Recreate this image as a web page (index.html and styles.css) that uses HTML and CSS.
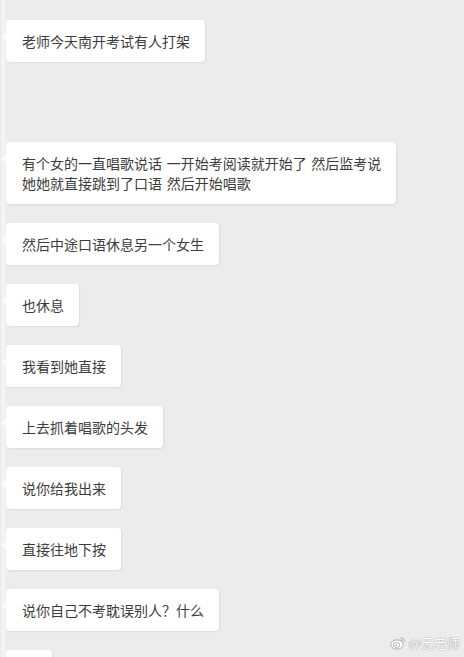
FILE: index.html
```html
<!DOCTYPE html>
<html lang="zh-CN">
<head>
<meta charset="utf-8">
<link rel="stylesheet" href="styles.css">
</head>
<body>
<div class="chat">
  <div class="bubble">老师今天南开考试有人打架</div>
  <div class="bubble first-gap wide-space">有个女的一直唱歌说话 一开始考阅读就开始了 然后监考说<br>她她就直接跳到了口语 然后开始唱歌</div>
  <div class="bubble">然后中途口语休息另一个女生</div>
  <div class="bubble">也休息</div>
  <div class="bubble">我看到她直接</div>
  <div class="bubble">上去抓着唱歌的头发</div>
  <div class="bubble">说你给我出来</div>
  <div class="bubble">直接往地下按</div>
  <div class="bubble">说你自己不考耽误别人？什么</div>
  <div class="bubble bubble-empty"></div>
</div>
<div class="watermark">
  <svg class="wb" width="16" height="14" viewBox="0 0 16 14">
    <ellipse cx="7" cy="8.5" rx="6.3" ry="4.6" fill="#fff" stroke="#aaa" stroke-width="1"/>
    <ellipse cx="6.5" cy="9" rx="3.2" ry="2.4" fill="none" stroke="#aaa" stroke-width="0.9"/>
    <circle cx="6" cy="9.3" r="0.9" fill="#aaa"/>
    <path d="M10.5 2.2 A3.2 3.2 0 0 1 14.6 5.8" fill="none" stroke="#aaa" stroke-width="1"/>
    <path d="M10.6 4.2 A1.4 1.4 0 0 1 12.6 5.6" fill="none" stroke="#aaa" stroke-width="0.9"/>
  </svg>
  <span class="wm-text">@无老师</span>
</div>
</body>
</html>
```
FILE: styles.css
```css
html, body {
  margin: 0;
  padding: 0;
}
body {
  width: 464px;
  height: 657px;
  overflow: hidden;
  background: linear-gradient(to right, #ededed 0, #ededed 2px, #f4f4f4 2px, #f4f4f4 5px, #ececec 5px);
  font-family: "Noto Sans CJK SC", "Microsoft YaHei", sans-serif;
  position: relative;
}
.chat {
  display: flex;
  flex-direction: column;
  align-items: flex-start;
  gap: 19px;
  padding: 20px 0 0 6px;
}
.bubble {
  position: relative;
  background: #fff;
  border-radius: 4px;
  padding: 11px 15px 11px 16px;
  font-size: 14px;
  line-height: 20px;
  color: #3c3c3c;
  white-space: nowrap;
  box-shadow: 1px 1px 2px rgba(0, 0, 0, 0.07);
}
.bubble::before {
  content: "";
  position: absolute;
  left: -5px;
  top: 13px;
  border-top: 4px solid transparent;
  border-bottom: 4px solid transparent;
  border-right: 5px solid #fafafa;
}
.wide-space {
  word-spacing: 1.5px;
}
.bubble-empty {
  width: 15px;
  height: 20px;
}
.first-gap {
  margin-top: 61px;
}
.watermark {
  position: absolute;
  right: 4px;
  bottom: 6px;
  display: flex;
  align-items: center;
  gap: 3px;
}
.wm-text {
  font-size: 13px;
  line-height: 16px;
  color: #fff;
  text-shadow: 0 0 1px #999, 0 0 1px #999;
}
```
